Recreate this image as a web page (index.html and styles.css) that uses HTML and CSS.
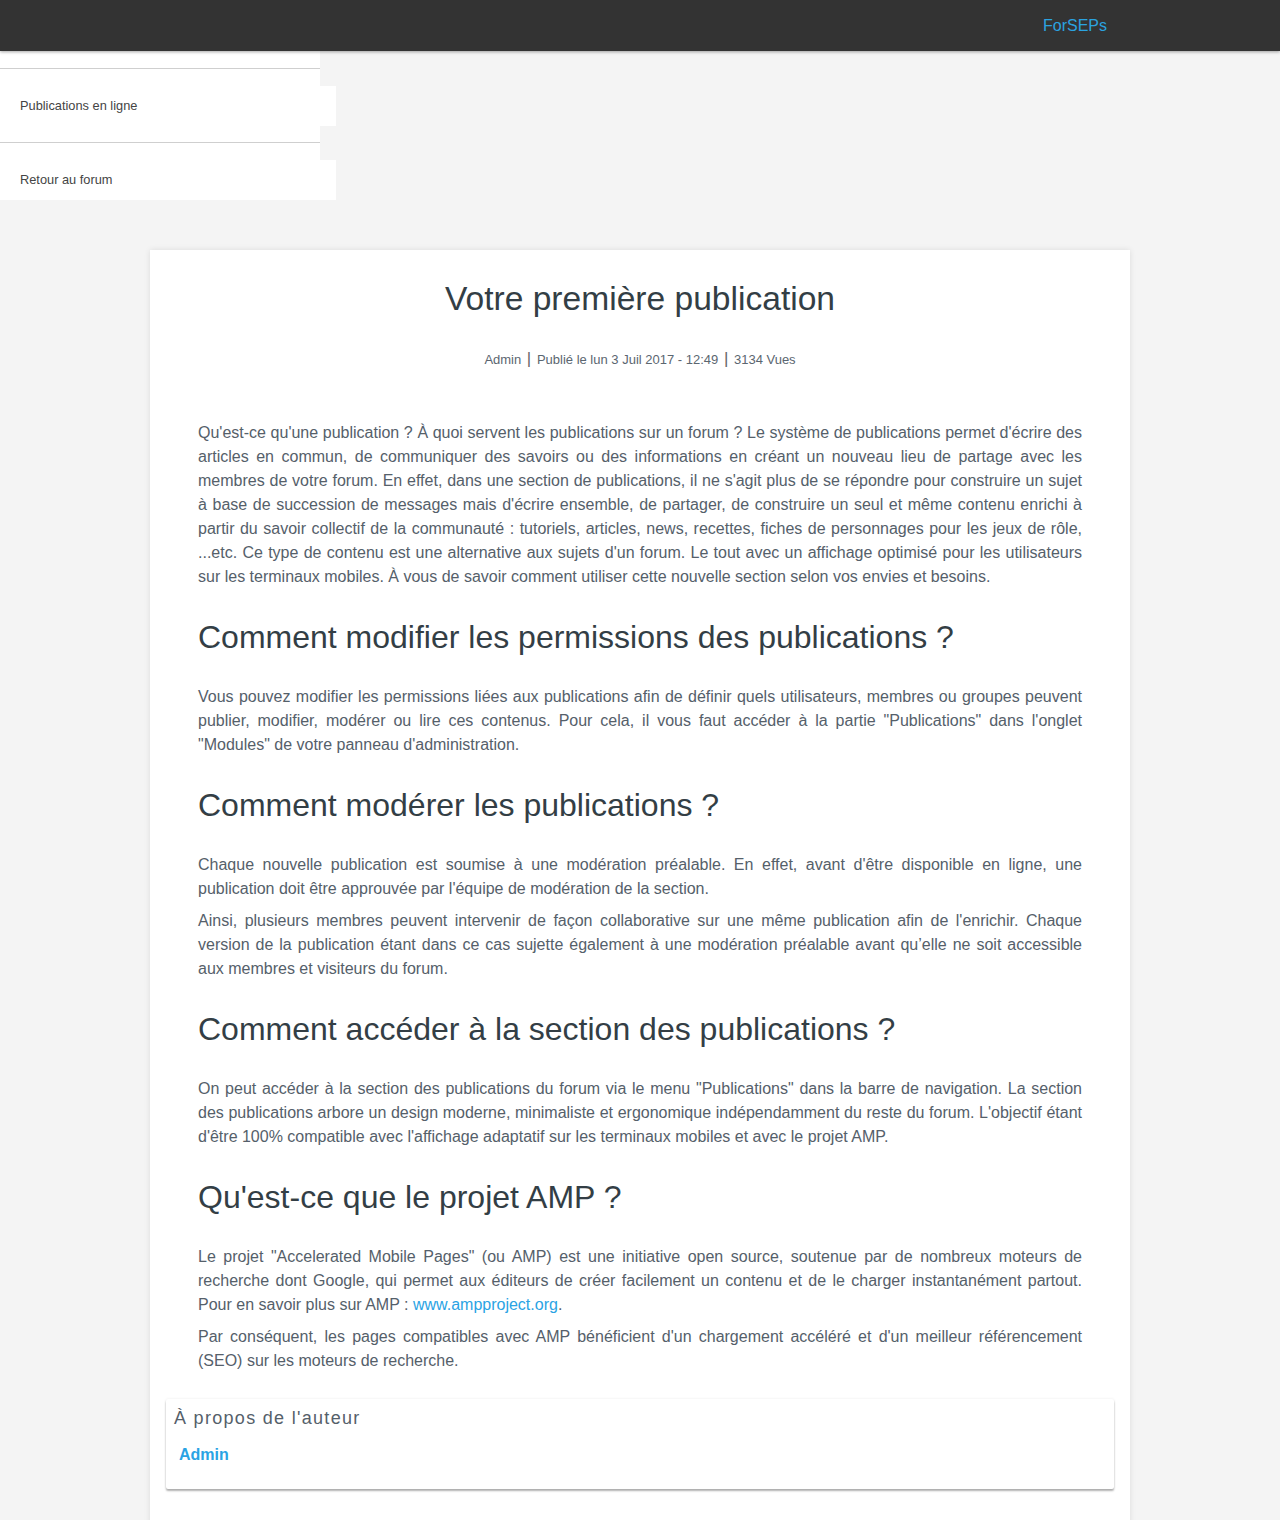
FILE: index.html
```html
<!DOCTYPE html>
<html lang="fr">
<head>
<meta charset="utf-8">
<title>Votre première publication</title>
<link rel="stylesheet" href="styles.css">
</head>
<body>
<header class="topbar">
  <a class="brand" href="#">ForSEPs</a>
</header>
<nav class="sidenav">
  <ul>
    <li class="empty"></li>
    <li><a href="#">Publications en ligne</a></li>
    <li class="last"><a href="#">Retour au forum</a></li>
  </ul>
</nav>
<main class="card">
  <h1 class="title">Votre première publication</h1>
  <div class="meta">Admin <span class="sep">|</span> Publié le lun 3 Juil 2017 - 12:49 <span class="sep">|</span> 3134 Vues</div>
  <article class="content">
    <p>Qu'est-ce qu'une publication ? À quoi servent les publications sur un forum ? Le système de publications permet d'écrire des articles en commun, de communiquer des savoirs ou des informations en créant un nouveau lieu de partage avec les membres de votre forum. En effet, dans une section de publications, il ne s'agit plus de se répondre pour construire un sujet à base de succession de messages mais d'écrire ensemble, de partager, de construire un seul et même contenu enrichi à partir du savoir collectif de la communauté : tutoriels, articles, news, recettes, fiches de personnages pour les jeux de rôle, ...etc. Ce type de contenu est une alternative aux sujets d'un forum. Le tout avec un affichage optimisé pour les utilisateurs sur les terminaux mobiles. À vous de savoir comment utiliser cette nouvelle section selon vos envies et besoins.</p>
    <h2>Comment modifier les permissions des publications ?</h2>
    <p>Vous pouvez modifier les permissions liées aux publications afin de définir quels utilisateurs, membres ou groupes peuvent publier, modifier, modérer ou lire ces contenus. Pour cela, il vous faut accéder à la partie "Publications" dans l'onglet "Modules" de votre panneau d'administration.</p>
    <h2>Comment modérer les publications ?</h2>
    <p>Chaque nouvelle publication est soumise à une modération préalable. En effet, avant d'être disponible en ligne, une publication doit être approuvée par l'équipe de modération de la section.</p>
    <p>Ainsi, plusieurs membres peuvent intervenir de façon collaborative sur une même publication afin de l'enrichir. Chaque version de la publication étant dans ce cas sujette également à une modération préalable avant qu’elle ne soit accessible aux membres et visiteurs du forum.</p>
    <h2>Comment accéder à la section des publications ?</h2>
    <p>On peut accéder à la section des publications du forum via le menu "Publications" dans la barre de navigation. La section des publications arbore un design moderne, minimaliste et ergonomique indépendamment du reste du forum. L'objectif étant d'être 100% compatible avec l'affichage adaptatif sur les terminaux mobiles et avec le projet AMP.</p>
    <h2>Qu'est-ce que le projet AMP ?</h2>
    <p>Le projet "Accelerated Mobile Pages" (ou AMP) est une initiative open source, soutenue par de nombreux moteurs de recherche dont Google, qui permet aux éditeurs de créer facilement un contenu et de le charger instantanément partout. Pour en savoir plus sur AMP : <a href="#">www.ampproject.org</a>.</p>
    <p>Par conséquent, les pages compatibles avec AMP bénéficient d'un chargement accéléré et d'un meilleur référencement (SEO) sur les moteurs de recherche.</p>
  </article>
  <section class="author">
    <h3>À propos de l'auteur</h3>
    <a class="author-name" href="#">Admin</a>
  </section>
</main>
</body>
</html>
```

FILE: styles.css
```css
html, body {
  margin: 0;
  padding: 0;
}
body {
  background: #f4f4f4;
  font-family: "Liberation Sans", Arial, sans-serif;
  color: #55606a;
}
a {
  text-decoration: none;
}
.topbar {
  height: 51px;
  background: #333333;
  box-shadow: 0 1px 3px rgba(0,0,0,0.35);
  display: flex;
  align-items: center;
  justify-content: flex-end;
  padding-right: 173px;
  position: relative;
  z-index: 2;
}
.brand {
  color: #2ba3e0;
  font-size: 16px;
}
.sidenav ul {
  list-style: none;
  margin: 0;
  padding: 0;
  width: 320px;
  background: #fff;
}
.sidenav li {
  padding: 17px 0 16px;
  border-top: 1px solid #cfcfcf;
}
.sidenav li.empty {
  border-top: none;
  padding: 17px 0 0;
}
.sidenav li.last {
  padding-bottom: 0;
}
.sidenav li a {
  display: flex;
  align-items: center;
  width: 316px;
  height: 40px;
  padding-left: 20px;
  padding-bottom: 2px;
  box-sizing: content-box;
  background: #fff;
  color: #444;
  font-size: 12.8px;
}
.sidenav li a {
  height: 38px;
}
.card {
  width: 980px;
  margin: 50px auto 0;
  background: #fff;
  box-shadow: 0 0 6px rgba(0,0,0,0.1);
  padding: 29px 0 32px;
  box-sizing: border-box;
  min-height: 1300px;
}
.title {
  margin: 0;
  text-align: center;
  font-size: 33.6px;
  font-weight: normal;
  line-height: 40px;
  color: #333e45;
}
.meta {
  margin-top: 30px;
  text-align: center;
  font-size: 13px;
  line-height: 20px;
  color: #5b6670;
}
.meta .sep {
  font-size: 17px;
  color: #666;
  padding: 0 2px;
}
.content {
  padding: 51px 48px 0;
}
.content p {
  margin: 0 0 8px;
  font-size: 16px;
  line-height: 24px;
  text-align: justify;
  color: #55606a;
}
.content p a {
  color: #2aa3e4;
}
.content h2 {
  margin: 30px 0 30px;
  font-size: 32px;
  line-height: 36px;
  font-weight: normal;
  color: #333e45;
}
.author {
  margin: 26px 16px 0;
  background: #fff;
  box-shadow: 0 2px 2px rgba(0,0,0,0.3), 0 0 3px rgba(0,0,0,0.08);
  border-radius: 2px;
  padding: 8px 8px 24px;
  height: 90px;
  box-sizing: border-box;
}
.author h3 {
  margin: 0;
  font-size: 18px;
  line-height: 22px;
  font-weight: normal;
  letter-spacing: 1.3px;
  color: #55606a;
}
.author-name {
  display: block;
  margin: 16px 0 0 5px;
  font-size: 16px;
  line-height: 20px;
  font-weight: bold;
  color: #2aa3e4;
}
```
